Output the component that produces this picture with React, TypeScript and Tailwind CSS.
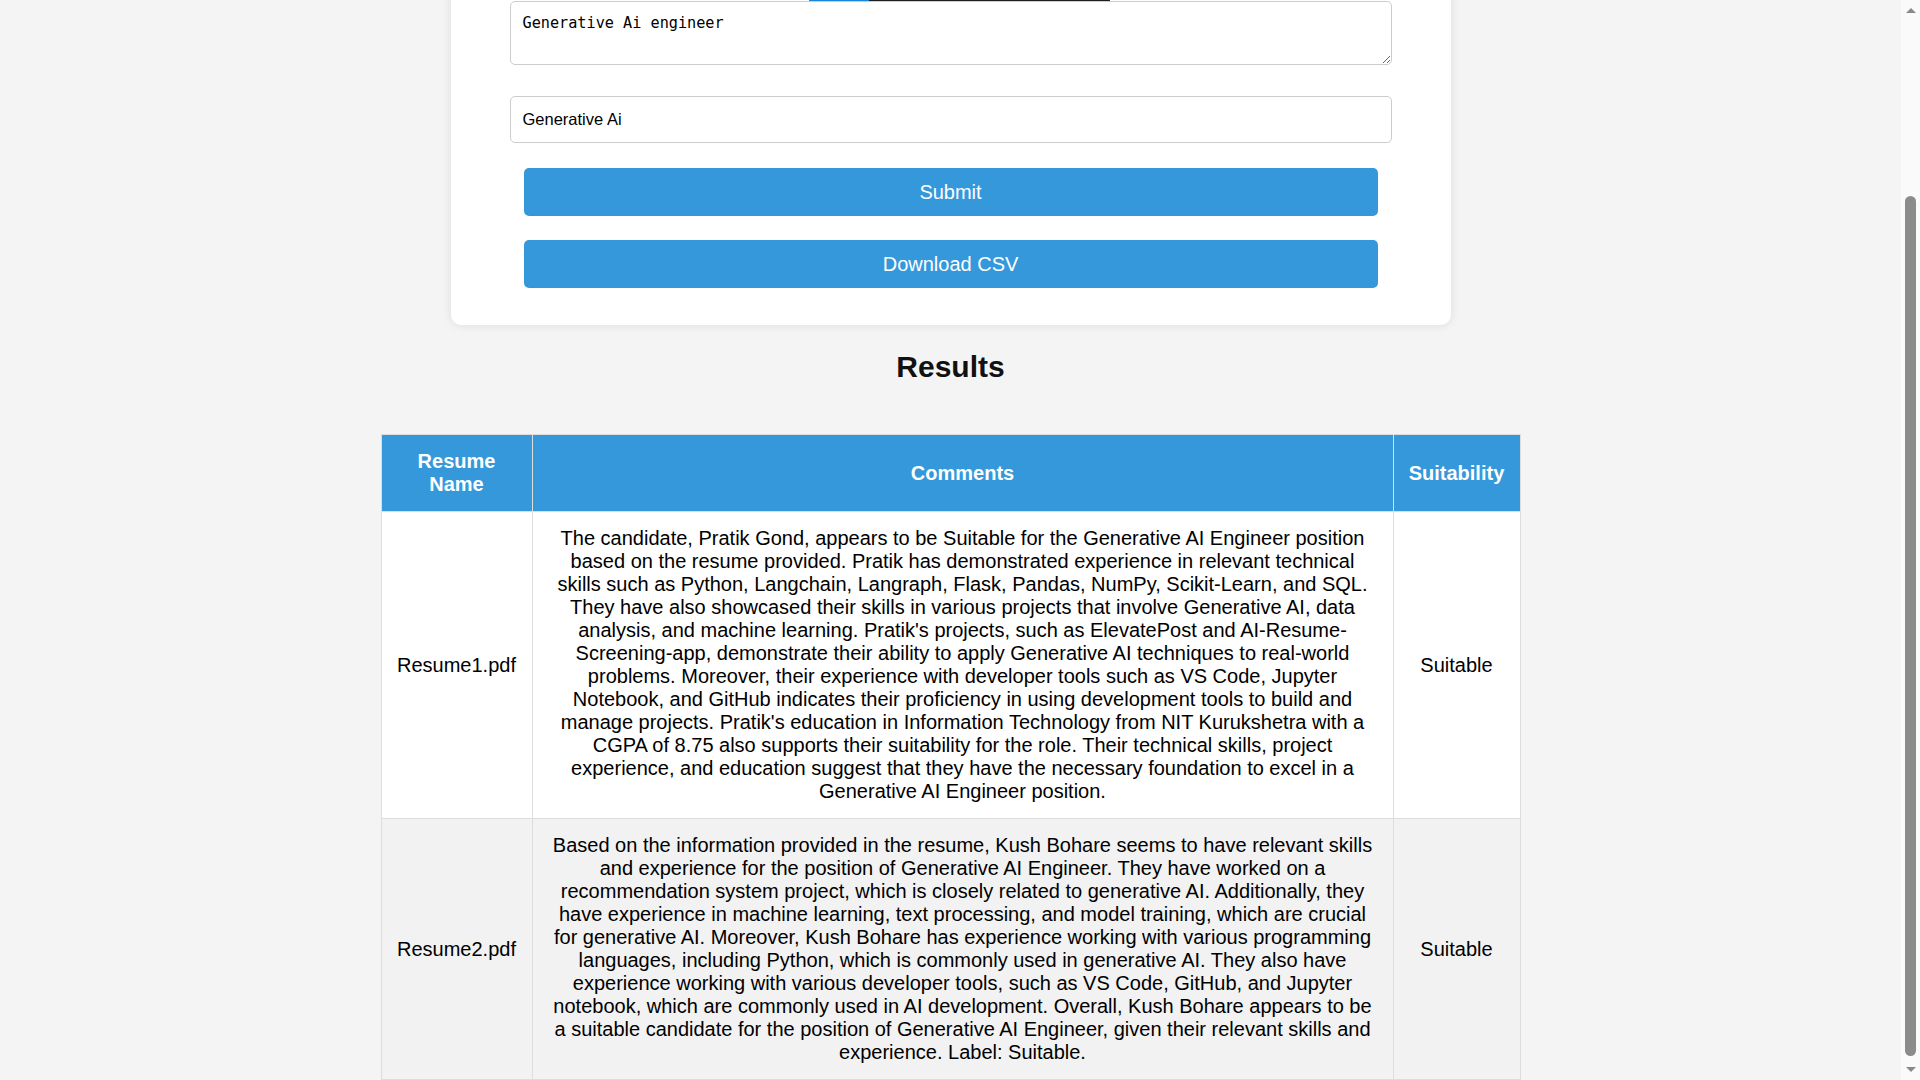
const results = [
  {
    name: "Resume1.pdf",
    comment:
      "The candidate, Pratik Gond, appears to be Suitable for the Generative AI Engineer position based on the resume provided. Pratik has demonstrated experience in relevant technical skills such as Python, Langchain, Langraph, Flask, Pandas, NumPy, Scikit-Learn, and SQL. They have also showcased their skills in various projects that involve Generative AI, data analysis, and machine learning. Pratik's projects, such as ElevatePost and AI-Resume-Screening-app, demonstrate their ability to apply Generative AI techniques to real-world problems. Moreover, their experience with developer tools such as VS Code, Jupyter Notebook, and GitHub indicates their proficiency in using development tools to build and manage projects. Pratik's education in Information Technology from NIT Kurukshetra with a CGPA of 8.75 also supports their suitability for the role. Their technical skills, project experience, and education suggest that they have the necessary foundation to excel in a Generative AI Engineer position.",
    suitability: "Suitable",
  },
  {
    name: "Resume2.pdf",
    comment:
      "Based on the information provided in the resume, Kush Bohare seems to have relevant skills and experience for the position of Generative AI Engineer. They have worked on a recommendation system project, which is closely related to generative AI. Additionally, they have experience in machine learning, text processing, and model training, which are crucial for generative AI. Moreover, Kush Bohare has experience working with various programming languages, including Python, which is commonly used in generative AI. They also have experience working with various developer tools, such as VS Code, GitHub, and Jupyter notebook, which are commonly used in AI development. Overall, Kush Bohare appears to be a suitable candidate for the position of Generative AI Engineer, given their relevant skills and experience. Label: Suitable.",
    suitability: "Suitable",
  },
];

function Scrollbar() {
  return (
    <div className="flex h-full w-[19px] shrink-0 flex-col bg-[#fafafa]">
      <div className="flex h-[17px] items-start justify-center pt-[8px]">
        <svg width="10" height="5" viewBox="0 0 10 5">
          <path d="M5 0 L10 5 L0 5 Z" fill="#8a8a8a" />
        </svg>
      </div>
      <div className="flex flex-1 justify-center">
        <div className="mt-[179px] h-[860px] w-[11px] rounded-full bg-[#8b8b8b]" />
      </div>
      <div className="flex h-[17px] items-end justify-center pb-[8px]">
        <svg width="10" height="5" viewBox="0 0 10 5">
          <path d="M0 0 L10 0 L5 5 Z" fill="#8a8a8a" />
        </svg>
      </div>
    </div>
  );
}

export default function App() {
  return (
    <div className="flex h-screen w-full overflow-hidden bg-[#f4f4f4] font-['Liberation_Sans',Arial,sans-serif] text-black">
      <main className="relative flex h-full flex-1 flex-col items-center justify-end overflow-hidden">
        {/* coloured strip lying over the textarea's top edge */}
        <div className="absolute left-[809px] top-0 flex h-px">
          <div className="w-[60px] bg-[#1a86db]" />
          <div className="w-[241px] bg-[#1f1f1f]" />
        </div>

        <div className="flex w-[1000px] shrink-0 flex-col rounded-[10px] bg-white px-[59px] pb-[37px] pt-[30px] shadow-[0_0_10px_rgba(0,0,0,0.1)]">
          <textarea
            defaultValue="Generative Ai engineer"
            className="h-[64px] w-full rounded-[5px] border border-[#cccccc] bg-white px-3 pb-3 pt-[10px] font-['DejaVu_Sans_Mono',monospace] text-[15.2px] text-black outline-none"
          />
          <input
            type="text"
            defaultValue="Generative Ai"
            className="mt-[31px] h-[47px] w-full rounded-[5px] border border-[#cccccc] bg-white px-3 text-[16.5px] text-black outline-none"
          />
          <button className="mx-[14px] mt-[25px] h-[48px] rounded-[5px] bg-[#3498db] text-[20px] leading-[23px] text-white">
            Submit
          </button>
          <button className="mx-[14px] mt-[24px] h-[48px] rounded-[5px] bg-[#3498db] text-[20px] leading-[23px] text-white">
            Download CSV
          </button>
        </div>

        <h2 className="mb-[50px] mt-[24px] shrink-0 text-[30px] font-bold leading-[35px] text-[#111]">
          Results
        </h2>

        <table className="w-[1139px] shrink-0 table-fixed border-collapse text-[20px] leading-[23px]">
          <colgroup>
            <col className="w-[151px]" />
            <col className="w-[861px]" />
            <col className="w-[127px]" />
          </colgroup>
          <thead>
            <tr className="bg-[#3498db] text-white">
              <th className="border border-[#dddddd] p-[15px] text-center font-bold">Resume Name</th>
              <th className="border border-[#dddddd] p-[15px] text-center font-bold">Comments</th>
              <th className="border border-[#dddddd] p-[15px] text-center font-bold">Suitability</th>
            </tr>
          </thead>
          <tbody>
            {results.map((r, i) => (
              <tr key={r.name} className={i % 2 === 1 ? "bg-[#f2f2f2]" : "bg-white"}>
                <td className="border border-[#dddddd] p-[15px] text-center align-middle">{r.name}</td>
                <td className="border border-[#dddddd] p-[15px] text-center align-middle">{r.comment}</td>
                <td className="border border-[#dddddd] p-[15px] text-center align-middle">{r.suitability}</td>
              </tr>
            ))}
          </tbody>
        </table>
      </main>
      <Scrollbar />
    </div>
  );
}
